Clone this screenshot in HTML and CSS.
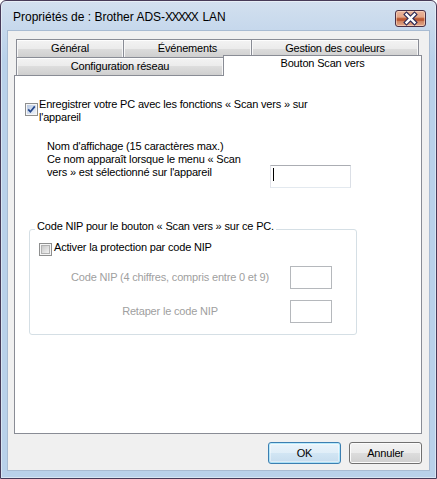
FILE: index.html
```html
<!DOCTYPE html>
<html lang="fr">
<head>
<meta charset="utf-8">
<title>Propriétés</title>
<link rel="stylesheet" href="styles.css">
</head>
<body>
<div class="window">
  <div class="titlebar">
    <div class="title">Propriétés de : Brother ADS-<span class="xx">XXXXX</span> LAN</div>
    <div class="close">
      <svg width="29" height="15" viewBox="0 0 29 15">
        <path d="M10.5 3.5 L18.5 11.5 M18.5 3.5 L10.5 11.5" stroke="#2e2a55" stroke-width="4.6" stroke-linecap="square" fill="none"/>
        <path d="M10.5 3.5 L18.5 11.5 M18.5 3.5 L10.5 11.5" stroke="#ffffff" stroke-width="2.4" stroke-linecap="square" fill="none"/>
      </svg>
    </div>
  </div>
  <div class="client">
    <div class="tabs">
      <div class="tabrow row1">
        <div class="tab t-gen">Général</div>
        <div class="tab t-evt">Événements</div>
        <div class="tab t-col">Gestion des couleurs</div>
      </div>
      <div class="tabrow row2">
        <div class="tab t-cfg">Configuration réseau</div>
        <div class="tab t-scan">Bouton Scan vers</div>
      </div>
    </div>
    <div class="panel">
      <div class="check-row reg">
        <span class="checkbox">
          <svg width="13" height="13" viewBox="0 0 13 13">
            <defs>
              <linearGradient id="chkOn" x1="0" y1="0" x2="1" y2="1">
                <stop offset="0" stop-color="#b9c9e2"/>
                <stop offset="1" stop-color="#eef3fa"/>
              </linearGradient>
            </defs>
            <rect x="0.5" y="0.5" width="12" height="12" fill="#f6f6f6" stroke="#8e8f8f"/>
            <rect x="2" y="2" width="9" height="9" fill="url(#chkOn)"/>
            <path d="M3.2 6.4 L5.4 8.8 L9.8 3.4" stroke="#24478d" stroke-width="1.7" fill="none"/>
          </svg>
        </span>
        <span class="check-label">Enregistrer votre PC avec les fonctions « Scan vers » sur<br>l'appareil</span>
      </div>
      <div class="name-row">
        <div class="name-text">Nom d'affichage (15 caractères max.)<br>Ce nom apparaît lorsque le menu « Scan<br>vers » est sélectionné sur l'appareil</div>
        <div class="textbox name-box"><span class="caret"></span></div>
      </div>
      <div class="group">
        <div class="group-title">Code NIP pour le bouton « Scan vers » sur ce PC.</div>
        <div class="check-row pin">
          <span class="checkbox">
            <svg width="13" height="13" viewBox="0 0 13 13">
              <defs>
                <linearGradient id="chkOff" x1="0" y1="0" x2="1" y2="1">
                  <stop offset="0" stop-color="#c6c6c6"/>
                  <stop offset="1" stop-color="#f4f4f4"/>
                </linearGradient>
              </defs>
              <rect x="0.5" y="0.5" width="12" height="12" fill="#f6f6f6" stroke="#8e8f8f"/>
              <rect x="2.5" y="2.5" width="8" height="8" fill="url(#chkOff)" stroke="#b2b2b2"/>
            </svg>
          </span>
          <span class="check-label">Activer la protection par code NIP</span>
        </div>
        <div class="pin-row first">
          <span class="pin-label">Code NIP (4 chiffres, compris entre 0 et 9)</span>
          <span class="textbox disabled pin-box"></span>
        </div>
        <div class="pin-row second">
          <span class="pin-label">Retaper le code NIP</span>
          <span class="textbox disabled pin-box"></span>
        </div>
      </div>
    </div>
    <div class="buttons">
      <button class="btn default">OK</button>
      <button class="btn">Annuler</button>
    </div>
  </div>
</div>
</body>
</html>
```

FILE: styles.css
```css
* {
  box-sizing: border-box;
}

html, body {
  margin: 0;
  padding: 0;
  background: #ffffff;
}

body {
  font-family: "Liberation Sans", Arial, sans-serif;
  font-size: 11px;
  color: #000;
}

.window {
  width: 437px;
  height: 479px;
  border: 1px solid #473a58;
  border-radius: 6px 6px 0 0;
  background: linear-gradient(#d3e0ef 0px, #c6d8ec 28px, #b9d1ea 60px, #b9d1ea 100%);
  box-shadow: inset 0 0 0 1px rgba(255, 255, 255, 0.45);
  padding: 0 6px 7px 6px;
  display: flex;
  flex-direction: column;
}

.titlebar {
  height: 29px;
  display: flex;
  justify-content: space-between;
  align-items: flex-start;
  flex: none;
}

.title {
  font-size: 12px;
  line-height: 15px;
  padding: 9px 0 0 6px;
  color: #000;
}

.title .xx {
  letter-spacing: -1.6px;
  margin-right: 2px;
}

.close {
  width: 31px;
  height: 17px;
  margin: 9px 4px 0 0;
  border: 1px solid #4a2f45;
  border-radius: 3px;
  background: linear-gradient(#ebb59b 0%, #e2a487 42%, #c4673f 46%, #b5512f 62%, #cf8462 68%, #e3a789 100%);
  box-shadow: inset 0 0 0 1px rgba(255, 226, 205, 0.55);
  display: flex;
}

.close svg {
  display: block;
}

.client {
  flex: 1;
  background: #f0f0f0;
  border: 1px solid #a8bbd2;
  display: flex;
  flex-direction: column;
}

.tabs {
  margin: 8px 7px 0 6px;
}

.tabrow {
  display: flex;
  align-items: flex-start;
  padding-left: 2px;
}

.tab {
  height: 18px;
  border: 1px solid #898c95;
  border-bottom: none;
  background: linear-gradient(#f3f3f3 0%, #ebebeb 50%, #dddddd 50%, #cfcfcf 100%);
  box-shadow: inset 0 1px 0 #fdfdfd, inset 1px 0 0 #f7f7f7, inset -1px 0 0 #f7f7f7;
  text-align: center;
  line-height: 13px;
  letter-spacing: -0.18px;
  flex: none;
}

.row1 .tab {
  padding-top: 2px;
}

.t-gen { width: 108px; }
.t-evt { width: 129px; margin-left: -1px; }
.t-col { width: 168px; margin-left: -1px; }

.t-cfg {
  width: 208px;
  padding-top: 2px;
}

.t-scan {
  width: 199px;
  height: 21px;
  margin: -2px 0 -1px -1px;
  background: #ffffff;
  box-shadow: none;
  position: relative;
  z-index: 2;
  padding-top: 1px;
}

.panel {
  height: 359px;
  margin: 0 7px 0 6px;
  border: 1px solid #898c95;
  background: #ffffff;
  padding: 22px 0 0 10px;
  position: relative;
  z-index: 1;
  letter-spacing: -0.18px;
}

.check-row {
  display: flex;
  align-items: flex-start;
}

.checkbox {
  width: 13px;
  height: 13px;
  flex: none;
  display: block;
}

.checkbox svg {
  display: block;
}

.check-label {
  line-height: 13px;
}

.reg .checkbox {
  margin-top: 5px;
}

.reg .check-label {
  margin-left: 1px;
}

.name-row {
  display: flex;
  align-items: flex-start;
  margin-top: 16px;
}

.name-text {
  margin-left: 22px;
  width: 223px;
  line-height: 13px;
}

.textbox {
  display: block;
  background: #ffffff;
  border: 1px solid;
  border-color: #abadb3 #dbdfe6 #e3e9ef #e2e3ea;
  flex: none;
}

.name-box {
  width: 81px;
  height: 23px;
  margin-top: 25px;
  display: flex;
  align-items: flex-start;
}

.caret {
  width: 1px;
  height: 13px;
  background: #000;
  margin: 2px 0 0 2px;
}

.group {
  margin: 41px 0 0 4px;
  width: 328px;
  border: 1px solid #d5dfe5;
  border-radius: 3px;
  padding: 0 0 11px 9px;
}

.group-title {
  display: table;
  background: #ffffff;
  line-height: 13px;
  padding: 0 2px;
  margin: -10px 0 0 -4px;
}

.pin {
  margin-top: 8px;
}

.pin .checkbox {
  margin-top: 2px;
}

.pin .check-label {
  margin-left: 2px;
}

.pin-row {
  display: flex;
  align-items: center;
}

.pin-row.first {
  margin-top: 10px;
}

.pin-row.second {
  margin-top: 11px;
}

.pin-label {
  width: 220px;
  margin-left: 21px;
  text-align: center;
  color: #a0a0a0;
  line-height: 13px;
}

.pin-box {
  width: 42px;
  height: 23px;
  margin-left: 10px;
  border-color: #b5b8bc;
}

.buttons {
  display: flex;
  justify-content: flex-end;
  gap: 8px;
  margin: 8px 7px 0 0;
}

.btn {
  width: 73px;
  height: 22px;
  padding: 0;
  font-family: "Liberation Sans", Arial, sans-serif;
  font-size: 11px;
  letter-spacing: -0.18px;
  color: #000;
  border: 1px solid #707070;
  border-radius: 3px;
  background: linear-gradient(#f2f2f2 0%, #ebebeb 50%, #dddddd 50%, #cfcfcf 100%);
  box-shadow: inset 0 0 0 1px #fbfbfb;
}

.btn.default {
  border-color: #3c7fb1;
  background: linear-gradient(#eaf4fb 0%, #e0eef8 50%, #d2e6f4 50%, #c6dcee 100%);
  box-shadow: inset 0 0 0 1px #48d0fc55, inset 0 0 0 2px #ffffff66;
}
```
